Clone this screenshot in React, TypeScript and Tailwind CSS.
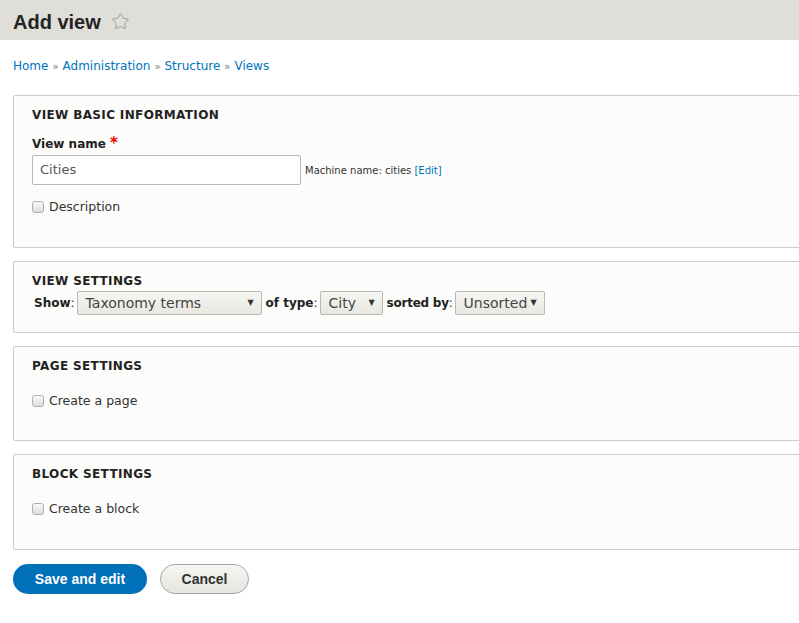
import { Star } from "lucide-react";

const font = { fontFamily: '"DejaVu Sans", "Open Sans", sans-serif' };
const btnFont = { fontFamily: '"Liberation Sans", Arial, sans-serif' };

const Checkbox = ({ label }: { label: string }) => (
  <label className="flex items-center gap-[5px] text-[12.5px] text-[#333]">
    <span className="w-[12px] h-[12px] rounded-[3px] border border-[#b0b0b0] bg-gradient-to-b from-[#fafafa] to-[#dcdcdc]" />
    {label}
  </label>
);

const Select = ({ value, width }: { value: string; width: string }) => (
  <div
    className={`${width} h-[24px] flex items-center justify-between pl-[8px] pr-[7px] border border-[#b8b8b8] rounded-[2px] bg-gradient-to-b from-[#f6f6f3] to-[#e8e7e1] text-[14px] text-[#444]`}
  >
    <span>{value}</span>
    <span className="text-[8px] text-[#333]">▼</span>
  </div>
);

const Panel = ({ title, children, className }: { title: string; children?: React.ReactNode; className: string }) => (
  <section className={`w-[800px] border border-[#ccc] rounded-[2px] bg-[#fcfcfa] pl-[18px] ${className}`}>
    <h2 className="text-[12px] leading-[16px] font-bold uppercase tracking-[0.03em] text-[#222]">{title}</h2>
    {children}
  </section>
);

export default function App() {
  return (
    <div className="w-[799px] h-[623px] overflow-hidden bg-white" style={font}>
      <header className="h-[40px] bg-[#e0ded8] flex items-center pl-[13px] gap-[10px] pt-[3px]">
        <h1 className="text-[20px] leading-none font-bold text-[#232323]" style={btnFont}>
          Add view
        </h1>
        <Star size={19} strokeWidth={1.2} className="text-[#999]" />
      </header>

      <div className="pl-[13px]">
        <nav className="mt-[17px] text-[12px] text-[#0074bd] flex items-center gap-[4px]">
          <span>Home</span>
          <span className="text-[#777] text-[10px]">»</span>
          <span>Administration</span>
          <span className="text-[#777] text-[10px]">»</span>
          <span>Structure</span>
          <span className="text-[#777] text-[10px]">»</span>
          <span>Views</span>
        </nav>

        <Panel title="View basic information" className="mt-[20px] h-[153px] pt-[11px]">
          <div className="mt-[12px] text-[12px] leading-[16px] font-bold text-[#222]">
            View name <span className="text-[#e00] text-[15px]">*</span>
          </div>
          <div className="flex items-center mt-[3px] gap-[4px]">
            <div className="w-[269px] h-[30px] border border-[#b8b8b8] rounded-[2px] bg-white flex items-center pl-[7px] text-[13px] text-[#555]">
              Cities
            </div>
            <span className="text-[10px] text-[#333]">
              Machine name: cities <span className="text-[#0074bd]">[Edit]</span>
            </span>
          </div>
          <div className="mt-[13px]">
            <Checkbox label="Description" />
          </div>
        </Panel>

        <Panel title="View settings" className="mt-[13px] h-[72px] pt-[11px]">
          <div className="flex items-center gap-[2px] mt-[2px] ml-[2px] text-[12px] text-[#333]">
            <span><b className="text-[#222]">Show</b>:</span>
            <Select value="Taxonomy terms" width="w-[185px]" />
            <span className="ml-[2px]"><b className="text-[#222]">of type</b>:</span>
            <Select value="City" width="w-[63px]" />
            <span className="ml-[2px] tracking-[-0.02em]"><b className="text-[#222]">sorted by</b>:</span>
            <Select value="Unsorted" width="w-[90px]" />
          </div>
        </Panel>

        <Panel title="Page settings" className="mt-[13px] h-[95px] pt-[11px]">
          <div className="mt-[18px]">
            <Checkbox label="Create a page" />
          </div>
        </Panel>

        <Panel title="Block settings" className="mt-[13px] h-[96px] pt-[11px]">
          <div className="mt-[18px]">
            <Checkbox label="Create a block" />
          </div>
        </Panel>

        <div className="flex gap-[13px] mt-[14px]" style={btnFont}>
          <button className="w-[134px] h-[30px] rounded-full bg-[#0071b8] text-white text-[14px] font-bold">
            Save and edit
          </button>
          <button className="w-[89px] h-[30px] rounded-full border border-[#a6a6a6] bg-gradient-to-b from-[#f6f6f3] to-[#e6e4df] text-[#333] text-[14px] font-bold">
            Cancel
          </button>
        </div>
      </div>
    </div>
  );
}
